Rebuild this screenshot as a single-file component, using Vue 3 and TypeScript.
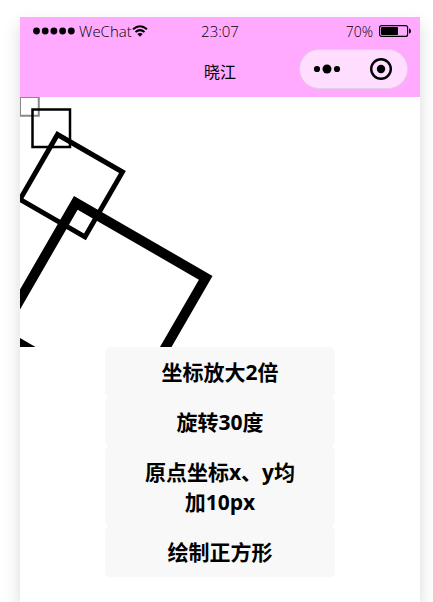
<script setup lang="ts">
import { ref } from 'vue'

type Matrix = [number, number, number, number, number, number]

interface Square {
  id: number
  matrix: Matrix
}

const SIDE = 15
const STEP = 10

const current = ref<Matrix>([1, 0, 0, 1, 0, 0])
const squares = ref<Square[]>([])

function multiply(m: Matrix, n: Matrix): Matrix {
  return [
    m[0] * n[0] + m[2] * n[1],
    m[1] * n[0] + m[3] * n[1],
    m[0] * n[2] + m[2] * n[3],
    m[1] * n[2] + m[3] * n[3],
    m[0] * n[4] + m[2] * n[5] + m[4],
    m[1] * n[4] + m[3] * n[5] + m[5],
  ]
}

function enlarge() {
  current.value = multiply(current.value, [2, 0, 0, 2, 0, 0])
}

function rotate() {
  const a = Math.PI / 6
  current.value = multiply(current.value, [Math.cos(a), Math.sin(a), -Math.sin(a), Math.cos(a), 0, 0])
}

function translate() {
  current.value = multiply(current.value, [1, 0, 0, 1, STEP, STEP])
}

function draw() {
  squares.value.push({ id: squares.value.length, matrix: current.value })
}

function isHairline(m: Matrix): boolean {
  return Math.hypot(m[0], m[1]) < 1.5
}

const actions = [
  { label: '坐标放大2倍', run: enlarge },
  { label: '旋转30度', run: rotate },
  { label: '原点坐标x、y均加10px', run: translate },
  { label: '绘制正方形', run: draw },
]

// Opening composition: four squares, each twice the size of the last.
draw()
translate()
enlarge()
draw()
translate()
rotate()
enlarge()
draw()
translate()
enlarge()
draw()
</script>

<template>
  <main class="phone">
    <header class="header">
      <div class="status">
        <div class="carrier">
          <svg class="signal" width="42" height="8" viewBox="0 0 42 8" aria-hidden="true">
            <circle v-for="n in 5" :key="n" :cx="n * 8.7 - 5.2" cy="4" r="3.4" />
          </svg>
          <span class="carrier-name">WeChat</span>
          <svg class="wifi" width="16" height="12" viewBox="0 0 16 12" aria-hidden="true">
            <path d="M1 4.2Q8 -1.8 15 4.2" />
            <path d="M3.5 7Q8 3.2 12.5 7" />
            <path class="wifi-base" d="M5.3 9Q8 6.9 10.7 9L8 11.8Z" />
          </svg>
        </div>
        <time class="time">23:07</time>
        <div class="power">
          <span>70%</span>
          <svg width="33" height="12" viewBox="0 0 33 12" aria-hidden="true">
            <rect class="battery-case" x="0.6" y="0.6" width="28" height="10.8" rx="2" />
            <rect x="2" y="2" width="17" height="8" rx="1" />
            <path d="M30 3.5Q32 3.5 32 6Q32 8.5 30 8.5Z" />
          </svg>
        </div>
      </div>
      <div class="nav">
        <h1 class="title">晓江</h1>
        <div class="capsule">
          <button class="capsule-button" type="button" aria-label="更多">
            <svg width="28" height="12" viewBox="0 0 28 12">
              <circle cx="4" cy="6" r="3.1" />
              <circle cx="14" cy="6" r="4.5" />
              <circle cx="24" cy="6" r="3.1" />
            </svg>
          </button>
          <button class="capsule-button" type="button" aria-label="关闭">
            <svg width="24" height="24" viewBox="0 0 24 24">
              <circle class="ring" cx="12" cy="12" r="9.8" />
              <circle cx="12" cy="12" r="4.2" />
            </svg>
          </button>
        </div>
      </div>
    </header>

    <svg class="canvas" role="img" aria-label="画布">
      <g transform="scale(1.25)">
        <rect
          v-for="square in squares"
          :key="square.id"
          :class="{ hairline: isHairline(square.matrix) }"
          :width="SIDE"
          :height="SIDE"
          :transform="`matrix(${square.matrix.join(' ')})`"
        />
      </g>
    </svg>

    <div class="actions">
      <button v-for="action in actions" :key="action.label" class="action" type="button" @click="action.run">
        {{ action.label }}
      </button>
    </div>
  </main>
</template>

<style>
body {
  background: #fff;
}

#app {
  display: flow-root;
}
</style>

<style scoped>
.phone {
  box-sizing: border-box;
  min-height: calc(100vh - 17px);
  margin: 17px 13px 0 20px;
  background: #fff;
  box-shadow: 0 8px 16px rgba(0, 0, 0, 0.15);
  font-family: "Open Sans", "Noto Sans CJK SC", sans-serif;
  color: #000;
}

.header {
  background: #ffaaff;
}

.status {
  display: grid;
  grid-template-columns: 1fr auto 1fr;
  align-items: center;
  height: 28px;
  padding: 0 8px 0 13px;
}

.carrier,
.power {
  display: flex;
  align-items: center;
}

.carrier-name {
  margin-left: 4px;
  font-size: 15px;
  font-weight: 300;
  line-height: 24px;
}

.wifi {
  fill: none;
  stroke: #000;
  stroke-width: 2;
}

.wifi-base {
  fill: #000;
  stroke: none;
}

.time {
  margin-right: 5px;
  font-size: 15px;
  font-weight: 300;
}

.power {
  justify-content: flex-end;
  gap: 6px;
  font-size: 14px;
  font-weight: 300;
}

.battery-case {
  fill: none;
  stroke: #000;
  stroke-width: 1.2;
}

.nav {
  display: grid;
  grid-template-columns: 1fr auto 1fr;
  align-items: center;
  height: 52px;
  padding: 0 12px;
}

.title {
  grid-column: 2;
  margin: 0;
  font-family: "Noto Sans CJK SC", sans-serif;
  font-size: 16px;
  font-weight: 400;
  line-height: 24px;
}

.capsule {
  box-sizing: border-box;
  display: flex;
  align-items: center;
  justify-self: end;
  width: 109px;
  height: 40px;
  margin-bottom: 4px;
  border: 1px solid #e6cbe6;
  border-radius: 20px;
  background: #ffddff;
}

.capsule-button {
  display: flex;
  flex: 1;
  align-items: center;
  justify-content: center;
  height: 24px;
  padding: 0;
  border: 0;
  background: none;
}

.capsule-button + .capsule-button {
  border-left: 1px solid #fbe2fb;
}

.ring {
  fill: none;
  stroke: #000;
  stroke-width: 2.4;
}

.canvas {
  display: block;
  width: 100%;
  height: 250px;
  overflow: hidden;
  fill: none;
  stroke: #000;
  stroke-width: 1;
}

.hairline {
  stroke: #888;
  stroke-width: 1.6;
}

.actions {
  display: flex;
  flex-direction: column;
  align-items: center;
}

.action {
  width: 230px;
  padding: 10px 30px;
  border: 0;
  border-radius: 5px;
  background: #f8f8f8;
  color: #000;
  font-family: inherit;
  font-size: 21px;
  font-weight: 700;
  line-height: 30px;
  text-align: center;
  cursor: pointer;
}
</style>
